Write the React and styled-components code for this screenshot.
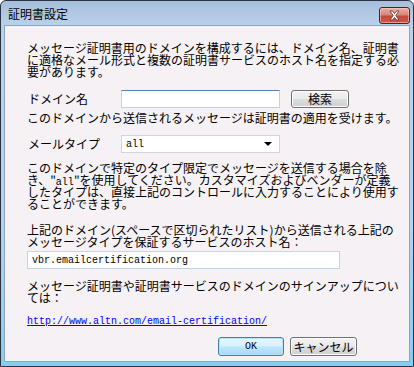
import React from 'react';
import styled, { createGlobalStyle } from 'styled-components';

const GlobalStyle = createGlobalStyle`
  html, body {
    margin: 0;
    padding: 0;
    background: #ffffff;
  }
  body {
    font-family: "Noto Sans CJK JP", "Liberation Sans", sans-serif;
    font-size: 12px;
    color: #000000;
  }
`;

const Window = styled.div`
  width: 414px;
  height: 367px;
  box-sizing: border-box;
  border: 1px solid #2a3440;
  border-radius: 6px 6px 0 0;
  background: linear-gradient(to bottom, #a7bfdc 0px, #bad1ea 24px, #b4d3ef 60%, #86cdf2 100%);
  display: flex;
  flex-direction: column;
  overflow: hidden;
`;

const TitleBar = styled.div`
  height: 24px;
  flex: none;
  display: flex;
  align-items: center;
  justify-content: space-between;
  padding: 0 3px 0 7px;
`;

const TitleText = styled.span`
  font-size: 12px;
  line-height: 12px;
  color: #000000;
  margin-top: 1px;
`;

const CloseButton = styled.div`
  width: 31px;
  height: 17px;
  box-sizing: border-box;
  border: 1px solid #5e1c14;
  border-radius: 3px;
  background: linear-gradient(to bottom, #e8b0a6 0%, #d8877a 45%, #c24a3b 55%, #c9584a 100%);
  box-shadow: inset 0 0 0 1px rgba(255, 210, 200, 0.55);
  display: flex;
  align-items: center;
  justify-content: center;
  margin-top: 4px;
`;

const Client = styled.div`
  flex: 1;
  margin: 0 3px 4px 3px;
  border: 1px solid #8aa6c2;
  background: #f5f1f5;
  padding: 16px 16px 0 22px;
  display: flex;
  flex-direction: column;
`;

const Para = styled.div`
  line-height: 12px;
  margin-top: ${(p) => p.$mt || 0}px;
  white-space: nowrap;
`;

const Line = styled.div`
  height: 12px;
`;

const Mono = styled.span`
  font-family: "Liberation Mono", "DejaVu Sans Mono", monospace;
  font-size: 10px;
`;

const Row = styled.div`
  display: flex;
  align-items: center;
  height: 18px;
  margin-top: ${(p) => p.$mt || 0}px;
`;

const Label = styled.span`
  width: 93px;
  padding-left: 1px;
  line-height: 12px;
`;

const TextBox = styled.div`
  width: ${(p) => p.$w}px;
  height: 18px;
  box-sizing: border-box;
  background: #ffffff;
  border: 1px solid #bdd3e8;
  border-top-color: ${(p) => (p.$focus ? '#4a86bd' : '#c9d7e4')};
  display: flex;
  align-items: center;
  padding-left: 4px;
  margin-top: ${(p) => p.$mt || 0}px;
  margin-left: ${(p) => p.$ml || 0}px;
`;

const Select = styled(TextBox)`
  border-color: #d4d4d4;
  justify-content: space-between;
  padding-right: 7px;
`;

const Arrow = styled.span`
  width: 0;
  height: 0;
  border-left: 4px solid transparent;
  border-right: 4px solid transparent;
  border-top: 4px solid #000000;
`;

const Button = styled.div`
  width: ${(p) => p.$w}px;
  height: ${(p) => p.$h || 19}px;
  box-sizing: border-box;
  border: 1px solid ${(p) => (p.$default ? '#3c7fb1' : '#707070')};
  border-radius: 3px;
  background: ${(p) =>
    p.$default
      ? 'linear-gradient(to bottom, #eaf6fd 0%, #d9f0fc 48%, #bee6fd 52%, #a7d9f5 100%)'
      : 'linear-gradient(to bottom, #f2f2f2 0%, #ebebeb 48%, #dddddd 52%, #cfcfcf 100%)'};
  box-shadow: inset 0 0 0 1px ${(p) => (p.$default ? '#b9e2f7' : '#fcfcfc')};
  display: flex;
  align-items: center;
  justify-content: center;
  line-height: 12px;
  margin-left: ${(p) => p.$ml || 0}px;
`;

const Link = styled.a`
  font-family: "Liberation Mono", "DejaVu Sans Mono", monospace;
  font-size: 10px;
  line-height: 12px;
  color: #0000ff;
  text-decoration: underline;
  margin-top: 12px;
  align-self: flex-start;
  margin-left: 0;
`;

const ButtonRow = styled.div`
  display: flex;
  justify-content: flex-end;
  gap: 6px;
  margin-top: 9px;
  padding-right: 36px;
`;

function CloseIcon() {
  return (
    <svg width="13" height="11" viewBox="0 0 13 11">
      <path
        d="M2 1 L4.5 1 L6.5 3.5 L8.5 1 L11 1 L7.8 5.5 L11 10 L8.5 10 L6.5 7.5 L4.5 10 L2 10 L5.2 5.5 Z"
        fill="#ffffff"
        stroke="#6b2a22"
        strokeWidth="0.8"
        strokeLinejoin="round"
      />
    </svg>
  );
}

export default function App() {
  return (
    <>
      <GlobalStyle />
      <Window>
        <TitleBar>
          <TitleText>証明書設定</TitleText>
          <CloseButton>
            <CloseIcon />
          </CloseButton>
        </TitleBar>
        <Client>
          <Para>
            <Line>メッセージ証明書用のドメインを構成するには、ドメイン名、証明書</Line>
            <Line>に適格なメール形式と複数の証明書サービスのホスト名を指定する必</Line>
            <Line>要があります。</Line>
          </Para>
          <Row $mt={12}>
            <Label>ドメイン名</Label>
            <TextBox $w={159} $focus />
            <Button $w={58} $h={18} $ml={11}>検索</Button>
          </Row>
          <Para $mt={4}>
            <Line>このドメインから送信されるメッセージは証明書の適用を受けます。</Line>
          </Para>
          <Row $mt={11}>
            <Label>メールタイプ</Label>
            <Select $w={159}>
              <Mono>all</Mono>
              <Arrow />
            </Select>
          </Row>
          <Para $mt={9}>
            <Line>このドメインで特定のタイプ限定でメッセージを送信する場合を除</Line>
            <Line>
              き、"<Mono>all</Mono>"を使用してください。カスタマイズおよびベンダーが定義
            </Line>
            <Line>したタイプは、直接上記のコントロールに入力することにより使用す</Line>
            <Line>ることができます。</Line>
          </Para>
          <Para $mt={14}>
            <Line>上記のドメイン(スペースで区切られたリスト)から送信される上記の</Line>
            <Line>メッセージタイプを保証するサービスのホスト名：</Line>
          </Para>
          <TextBox $w={313} $mt={3}>
            <Mono>vbr.emailcertification.org</Mono>
          </TextBox>
          <Para $mt={11}>
            <Line>メッセージ証明書や証明書サービスのドメインのサインアップについ</Line>
            <Line>ては：</Line>
          </Para>
          <Link href="#">http://www.altn.com/email-certification/</Link>
          <ButtonRow>
            <Button $w={66} $default>
              <Mono>OK</Mono>
            </Button>
            <Button $w={67}>キャンセル</Button>
          </ButtonRow>
        </Client>
      </Window>
    </>
  );
}
